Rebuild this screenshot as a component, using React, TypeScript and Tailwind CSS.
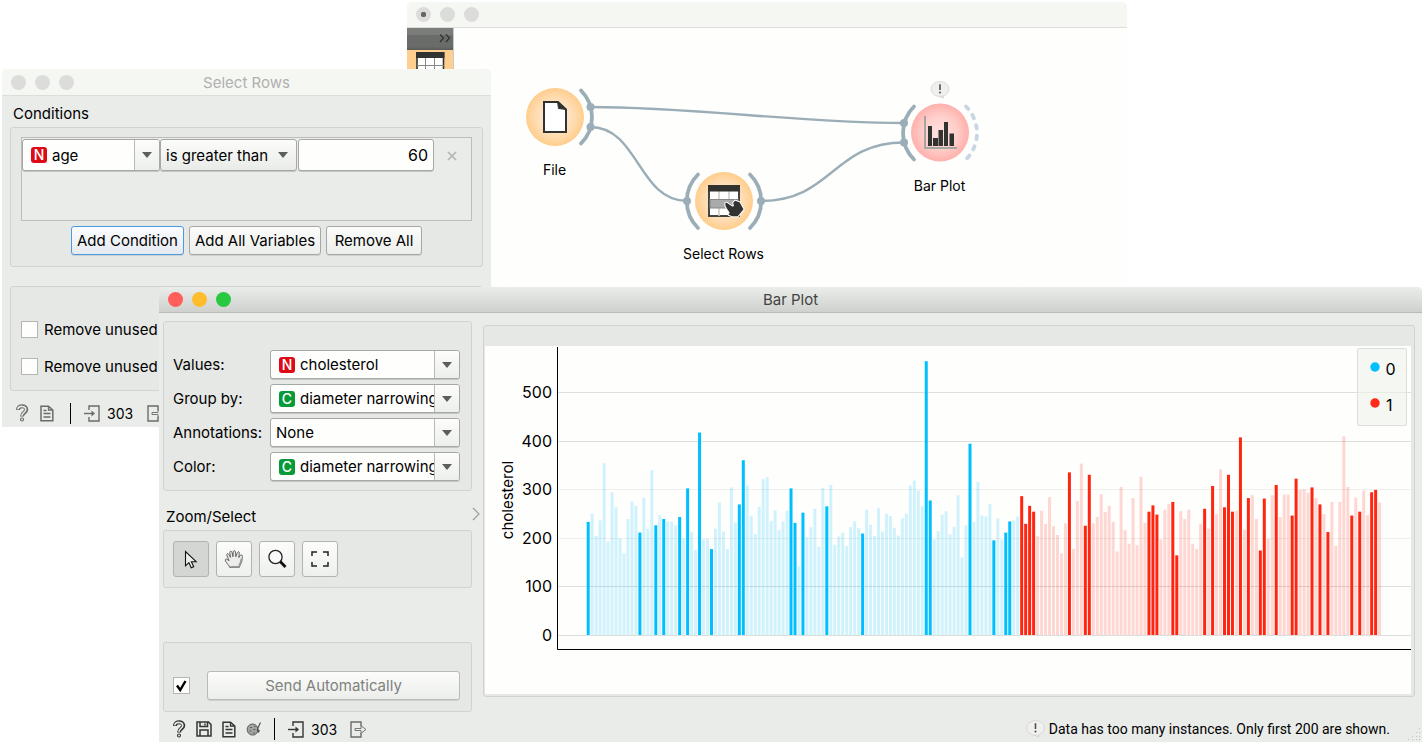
import { useId, type ReactNode } from "react";

const values = [
  233, 250, 204, 236, 354, 192, 294, 263, 199, 168, 239, 275, 266, 211, 283, 219, 340, 226, 247, 239,
  234, 233, 226, 243, 199, 302, 212, 175, 417, 197, 198, 177, 219, 273, 213, 177, 304, 232, 269, 360,
  308, 245, 208, 264, 321, 325, 235, 257, 216, 234, 256, 302, 231, 141, 252, 201, 222, 260, 182, 303,
  265, 309, 186, 203, 211, 183, 222, 234, 220, 209, 258, 227, 204, 261, 213, 250, 245, 221, 205, 240,
  250, 308, 318, 298, 265, 564, 277, 197, 214, 248, 255, 207, 223, 288, 160, 226, 394, 233, 315, 246,
  244, 270, 195, 240, 196, 211, 234, 236, 244,
  286, 229, 266, 254, 203, 256, 229, 284, 224, 206, 168, 230, 335, 177, 276, 353, 225, 330, 230, 243,
  290, 253, 266, 233, 172, 305, 216, 188, 282, 185, 326, 231, 254, 267, 248, 197, 258, 270, 274, 164,
  255, 239, 258, 188, 177, 229, 260, 219, 307, 249, 341, 263, 330, 254, 256, 407, 217, 282, 288, 239,
  174, 281, 198, 288, 309, 243, 289, 289, 246, 322, 299, 300, 293, 304, 282, 269, 249, 212, 274, 184,
  274, 409, 305, 246, 283, 254, 298, 247, 294, 299, 273,
];
const firstOfGroupOne = 109;
const selected = new Set([
  0, 13, 17, 19, 23, 25, 28, 31, 38, 39, 51, 52, 54, 60, 69, 85, 86, 96, 102, 105, 106, 109, 110, 111, 112,
  121, 125, 126, 141, 142, 143, 147, 148, 155, 157, 160, 161, 162, 164, 166, 169, 170, 173, 177, 178, 182,
  184, 186, 192, 194, 197, 198,
]);

function Chart() {
  const y = (v: number) => 289 - v * 0.4855;
  return (
    <svg viewBox="0 0 926 348" className="block w-full bg-[#fefefd]" role="img" aria-label="cholesterol by instance">
      {[0, 100, 200, 300, 400, 500].map((v) => (
        <g key={v}>
          <rect x="73" y={Math.round(y(v))} width="853" height="1" fill={v === 200 || v === 300 ? "#efefee" : "#dededd"} />
          <text x="67" y={Math.round(y(v)) + 6} textAnchor="end" fontSize="16">{v}</text>
        </g>
      ))}
      {values.map((v, i) => (
        <rect
          key={i}
          x={101.7 + i * 3.977}
          y={y(v)}
          width="3"
          height={289 - y(v)}
          fill={i < firstOfGroupOne ? "#00bfff" : "#ff2611"}
          fillOpacity={selected.has(i) ? 1 : 0.18}
        />
      ))}
      <path d="M72.5 1V303.500H926" fill="none" stroke="#000" />
      <text transform="translate(28 154) rotate(-90)" textAnchor="middle" fontSize="15">cholesterol</text>
      <rect x="872.5" y="2.500" width="49" height="77" rx="1.500" fill="#eef1ed" fillOpacity="0.6" stroke="#dcdedb" />
      <circle cx="890" cy="21" r="4.700" fill="#00bfff" />
      <circle cx="890" cy="57" r="4.700" fill="#ff2a17" />
      <text x="900.500" y="29" fontSize="16">0</text>
      <text x="901" y="65" fontSize="16">1</text>
    </svg>
  );
}

function Bubble() {
  return (
    <>
      <ellipse cx="9.500" cy="8" rx="9" ry="7.500" fill="#f0f0ef" stroke="#d2d3d2" strokeWidth="0.800" />
      <path d="M8.500 15l4 2.200.6-2.700" fill="#e6e6e5" stroke="#c9cac9" strokeWidth="0.700" />
      <path d="M9.500 3.200v5.800" stroke="#505050" strokeWidth="1.600" />
      <circle cx="9.500" cy="11.600" r="1" fill="#505050" />
    </>
  );
}

function Workflow() {
  return (
    <svg viewBox="407 28 720 262" className="block w-full" fontSize="14" textAnchor="middle">
      <defs>
        <radialGradient id="orange">
          <stop offset="0.2" stopColor="#ffead6" />
          <stop offset="0.600" stopColor="#ffdfb9" />
          <stop offset="1" stopColor="#ffcd8c" />
        </radialGradient>
        <radialGradient id="pink">
          <stop offset="0.200" stopColor="#ffdcd9" />
          <stop offset="0.600" stopColor="#ffcdc9" />
          <stop offset="1" stopColor="#ffb0ac" />
        </radialGradient>
        <linearGradient id="strip" x1="0" y1="0" x2="0" y2="1">
          <stop offset="0" stopColor="#7b7d7a" />
          <stop offset="0.300" stopColor="#7b7d7a" />
          <stop offset="0.320" stopColor="#6a6c69" />
          <stop offset="0.850" stopColor="#6a6c69" />
          <stop offset="1" stopColor="#585a57" />
        </linearGradient>
      </defs>
      {/* collapsed tool box */}
      <rect x="407" y="28" width="46" height="22" fill="url(#strip)" />
      <path d="M440 34.500l3.500 3.500-3.500 4M446 34.500l3.500 3.500-3.500 4" fill="none" stroke="#333" strokeWidth="1.300" />
      <rect x="407" y="50" width="46" height="32" fill="#ffcf8f" />
      <path d="M453.500 28v60" stroke="#c4cbd2" />
      <rect x="417" y="53" width="26.500" height="26" fill="#fff" stroke="#30332f" strokeWidth="1.600" />
      <rect x="416" y="52" width="28.500" height="6" fill="#30332f" />
      <path d="M425.500 58v20M434.500 58v20M417 65.500h27" stroke="#888" />

      {/* links */}
      <g fill="none" stroke="#9badb6" strokeWidth="2.300">
        <path d="M590 107C695 107 799 123 904 123" />
        <path d="M590 127C639 127 638 201 687 201" />
        <path d="M761 201C832 201 833 142.500 904 142.500" />
      </g>
      <g fill="none" stroke="#9badb6" strokeWidth="3.800" strokeLinecap="round">
        <path d="M581 90.500A37.500 37.500 0 0 1 581 143.500" />
        <path d="M698 174.500A37.500 37.500 0 0 0 698 228" />
        <path d="M750 174.500A37.500 37.500 0 0 1 750 228" />
        <path d="M914 106.500A37.500 37.500 0 0 0 914 159.500" />
        <path d="M966 106.500A37.500 37.500 0 0 1 966 159.500" stroke="#c8d5e2" strokeDasharray="3.500 7.200" />
      </g>
      <g fill="#9badb6">
        <circle cx="590.500" cy="107" r="4" />
        <circle cx="590.500" cy="127" r="4" />
        <circle cx="687" cy="201" r="4" />
        <circle cx="761" cy="201" r="4" />
        <circle cx="904" cy="123" r="4" />
        <circle cx="904" cy="142.500" r="4" />
      </g>

      {/* File */}
      <circle cx="555" cy="117" r="29" fill="url(#orange)" />
      <path d="M544 102H558L566 109.500V132H544Z" fill="#fff" stroke="#30332f" strokeWidth="2" />
      <path d="M557.500 101.500L566.500 109.500 558.500 108.500Z" fill="#30332f" stroke="#30332f" />
      <text x="554.500" y="175">File</text>

      {/* Select Rows */}
      <circle cx="724" cy="201" r="29" fill="url(#orange)" />
      <rect x="709" y="186" width="30" height="30" fill="#fff" stroke="#30332f" strokeWidth="1.800" />
      <path d="M719 191v25M729 191v25" stroke="#cfc8c2" strokeWidth="1.500" />
      <rect x="710" y="199.500" width="28" height="8.500" fill="#aaa" stroke="#888" />
      <rect x="708" y="185" width="32" height="6.500" fill="#30332f" />
      <path
        d="M725.300 203.300c.8-.8 1.800-.4 2.600.2l4.300 3 1.800-.3-.8-3.500 2-1.900 4.300 1.500 4 7-4.500 5.500-1.500 1.500h-5.500l-3.500-1.800 1.200-1.800-3-4.500-1.200-2.500z"
        fill="#30332f"
        stroke="#fff"
        strokeWidth="2"
        strokeLinejoin="round"
        paintOrder="stroke"
      />
      <text x="723.500" y="259">Select Rows</text>

      {/* Bar Plot */}
      <circle cx="940" cy="132.500" r="29" fill="url(#pink)" />
      <path d="M925 116v32h32" fill="none" stroke="#a5a5a2" strokeWidth="2" />
      <path d="M928 126h4v20h-4zM933 138h5v8h-5zM938.500 130h4.500v16h-4.500zM944 122h4v24h-4zM949.500 133.500h4.500v12.500h-4.500z" fill="#30332f" />
      <g transform="translate(930.500 81)">
        <Bubble />
      </g>
      <text x="939.500" y="190.500">Bar Plot</text>
    </svg>
  );
}

function Lights({ colors }: { colors: [string, string, string] }) {
  return (
    <div className="absolute left-[9px] flex gap-[9px]">
      {colors.map((c, i) => (
        <span key={i} className={`size-[15px] rounded-full ${c}`} />
      ))}
    </div>
  );
}

function Badge({ kind }: { kind: "N" | "C" }) {
  return (
    <span
      className={`ml-2 grid size-4 shrink-0 place-items-center rounded-[3px] text-[14px] leading-none font-medium text-white ${kind === "N" ? "bg-[#de0a16]" : "bg-[#079a38]"}`}
    >
      {kind}
    </span>
  );
}

function Arrow() {
  return (
    <svg viewBox="0 0 10 6" className="h-[6px] w-[10px]" aria-hidden="true">
      <path d="M0 0h10L5 6z" fill="#5c5e5c" />
    </svg>
  );
}

function Combo({ id, label, badge, value }: { id: string; label?: string; badge?: "N" | "C"; value: string }) {
  return (
    <div className="flex h-full min-w-0 flex-1 items-stretch overflow-hidden rounded-[3px] border border-[#a6a8a5] bg-[#fefefd] shadow-[0_1px_0_#c4c6c3]">
      <div className="flex min-w-0 flex-1 items-center">
        {badge && <Badge kind={badge} />}
        <select id={id} aria-label={label} className="h-full w-0 flex-1 appearance-none overflow-hidden bg-transparent pt-[2px] pl-[5px] text-[15px] text-clip outline-none">
          <option>{value}</option>
        </select>
      </div>
      <span className="pointer-events-none grid w-[25px] shrink-0 place-items-center border-l border-[#b8bab7] bg-linear-to-b from-[#fdfdfc] to-[#ecefeb]">
        <Arrow />
      </span>
    </div>
  );
}

function Field({ label, badge, value }: { label: string; badge?: "N" | "C"; value: string }) {
  const id = useId();
  return (
    <div className="flex h-[29px] items-center">
      <label htmlFor={id} className="w-[97px] shrink-0 pt-[2px] whitespace-nowrap">
        {label}
      </label>
      <Combo id={id} badge={badge} value={value} />
    </div>
  );
}

function Check({ label, hidden, checked }: { label: string; hidden?: boolean; checked?: boolean }) {
  return (
    <label className="flex items-center gap-[6px] whitespace-nowrap">
      <span className="relative grid size-[17px] place-items-center">
        <input
          type="checkbox"
          defaultChecked={checked}
          aria-label={hidden ? label : undefined}
          className="peer size-[17px] appearance-none border border-[#b4b6b3] bg-[#fefefd]"
        />
        <svg viewBox="0 0 17 17" className="pointer-events-none absolute inset-0 hidden peer-checked:block" aria-hidden="true">
          <path d="M4 8.500l3.200 4.500L12.500 4" fill="none" stroke="#000" strokeWidth="2.400" />
        </svg>
      </span>
      {!hidden && <span className="pt-[2px]">{label}</span>}
    </label>
  );
}

function PushButton({ children, className }: { children: ReactNode; className: string }) {
  return (
    <button type="button" className={`h-[29px] rounded-[3px] border pt-[2px] whitespace-nowrap shadow-[0_1px_0_#cfd1ce] ${className}`}>
      {children}
    </button>
  );
}

const box = "rounded-[3px] border border-[#d1d3d0] bg-[#e6e8e5]";

function HelpIcon() {
  return (
    <svg viewBox="0 0 14 18" className="h-[18px] w-[14px]" fill="none" aria-hidden="true">
      <path d="M3 6c-.2-5 8.500-5 8.300-.3C11.200 8.500 7 8.500 7 12.500" stroke="currentColor" strokeWidth="4" />
      <path d="M2.800 5.300c.5-3.800 8.200-4 8 .4C10.600 8.200 7 8.500 7 11.800" stroke="#e9ebe8" strokeWidth="1.600" />
      <circle cx="7" cy="15.500" r="1.500" fill="#e9ebe8" stroke="currentColor" strokeWidth="1.100" />
    </svg>
  );
}

function ReportIcon() {
  return (
    <svg viewBox="0 0 14 17" className="h-[17px] w-[14px]" fill="none" stroke="currentColor" strokeWidth="1.300" aria-hidden="true">
      <path d="M1 1.200h7.500L12.800 5v10.800H1z" strokeWidth="1.500" />
      <path d="M8.500 1.200V5h4.300M3.500 5.500h3M3.500 8.500h7M3.500 12h7" />
    </svg>
  );
}

function SaveIcon() {
  return (
    <svg viewBox="0 0 16 16" className="size-4" fill="none" stroke="currentColor" strokeWidth="1.500" aria-hidden="true">
      <path d="M1 1h11.500L15 3.500V15H1zM4 1v4.500h7.500V1M4 15V9h8v6" />
      <path d="M9 2.500v2" />
    </svg>
  );
}

function PaletteIcon() {
  return (
    <svg viewBox="0 0 16 16" className="size-4" fill="none" aria-hidden="true">
      <path d="M6.500 3C3 3 1 6 1.200 8.800 1.500 12 4 14.500 7.500 14c3.500-.5 3-2.500 4.300-3.800C12.300 6 10 3 6.500 3z" fill="#a3a5a2" stroke="#5a5b5a" />
      <path d="M4 6.500h2M8 5.500h1.500M3.500 10h2M7.500 8.500h2M7 12h2" stroke="#5a5b5a" />
      <path d="M14.500 1.500l-2.600 5.500-.6 3" stroke="#4b4c4b" strokeWidth="1.100" />
      <path d="M12 8.500l1.500.5c.5 1.500-.5 3-2 3z" fill="#4b4c4b" />
    </svg>
  );
}

function InputIcon() {
  return (
    <svg viewBox="0 0 16 17" className="h-[17px] w-4" fill="none" stroke="currentColor" strokeWidth="1.400" aria-hidden="true">
      <path d="M5 5V1h10v15H5v-4" />
      <path d="M0 8.500h9" />
      <path d="M7.500 5.500L11 8.500l-3.500 3z" fill="currentColor" stroke="none" />
    </svg>
  );
}

function OutputIcon() {
  return (
    <svg viewBox="0 0 17 17" className="h-[17px] w-[17px]" fill="none" stroke="currentColor" strokeWidth="1.400" aria-hidden="true">
      <path d="M11 5V1H1v15h10v-4" />
      <path d="M5 7.500h6V4.700l5 3.800-5 3.800V9.500H5z" strokeWidth="0.900" />
    </svg>
  );
}

function IconButton({ label, children }: { label: string; children: ReactNode }) {
  return (
    <button type="button" aria-label={label} className="grid place-items-center">
      {children}
    </button>
  );
}

function ToolButton({ label, pressed, children }: { label: string; pressed?: boolean; children: ReactNode }) {
  return (
    <button
      type="button"
      aria-label={label}
      aria-pressed={pressed}
      className={`grid size-9 place-items-center rounded-[3px] border border-[#b1b3b0] ${pressed ? "bg-[#d4d6d3]" : "bg-linear-to-b from-[#fcfdfb] to-[#eef0ed]"}`}
    >
      {children}
    </button>
  );
}

function CanvasWindow() {
  return (
    <section className="absolute top-[2px] left-[407px] w-[720px] overflow-hidden rounded-t-[5px] bg-[#fefefd]">
      <header className="flex h-[26px] items-center border-b border-[#dcdedb] bg-[#f5f7f3]">
        <Lights colors={["bg-[radial-gradient(circle,#666_2.5px,#dcdcdb_3px)]", "bg-[#dcdcdb]", "bg-[#dcdcdb]"]} />
      </header>
      <Workflow />
    </section>
  );
}

function SelectRowsWindow() {
  return (
    <section className="absolute top-[69px] left-[2px] w-[489px] overflow-hidden rounded-t-[5px] bg-[#eaece9]">
      <header className="relative flex h-[27px] items-center justify-center border-b border-[#dcdedb] bg-[#f5f7f3] text-[#b0b0af]">
        <Lights colors={["bg-[#dcdcdb]", "bg-[#dcdcdb]", "bg-[#dcdcdb]"]} />
        <h2 className="pt-[2px]">Select Rows</h2>
      </header>
      <div className="px-2 pt-[8px]">
        <h3 className="pl-[3px] leading-[20px]">Conditions</h3>
        <div className={`${box} mt-[3px] px-[10px] pt-[9px] pb-[11px]`}>
          <div className="h-[84px] border border-[#bcbebb] bg-[#eaece9] py-px">
            <div className="flex h-8 items-center">
              <div className="flex h-full w-[138px]">
                <Combo id="condition-variable" label="Variable" badge="N" value="age" />
              </div>
              <div className="relative flex h-full w-[137px] items-center rounded-[3px] border border-[#a6a8a5] bg-linear-to-b from-[#fcfdfb] to-[#e9ebe8] shadow-[0_1px_0_#c4c6c3]">
                <select aria-label="Operator" className="h-full w-full appearance-none bg-transparent pt-[2px] pl-[5px] outline-none">
                  <option>is greater than</option>
                </select>
                <span className="pointer-events-none absolute right-2">
                  <Arrow />
                </span>
              </div>
              <input
                aria-label="Value"
                defaultValue="60"
                className="ml-px h-full w-[136px] rounded-[3px] border border-[#a6a8a5] bg-[#fefefd] px-[5px] text-right text-[16px] shadow-[0_1px_0_#c4c6c3] outline-none"
              />
              <button type="button" aria-label="Remove condition" className="mt-[2px] ml-[13px] grid size-[10px] place-items-center">
                <svg viewBox="0 0 10 10" className="size-[10px]">
                  <path d="M1 1l8 8M9 1l-8 8" stroke="#b4b6b3" strokeWidth="1.700" />
                </svg>
              </button>
            </div>
          </div>
          <div className="mt-[5px] flex gap-[5px] pl-[50px]">
            <PushButton className="w-[113px] border-[#4b9ae4] bg-linear-to-b from-[#fbfdff] to-[#e6eaf0]">Add Condition</PushButton>
            <PushButton className="w-[132px] border-[#a6a8a5] bg-linear-to-b from-[#fcfdfb] to-[#eceeeb]">Add All Variables</PushButton>
            <PushButton className="w-[96px] border-[#a6a8a5] bg-linear-to-b from-[#fcfdfb] to-[#eceeeb]">Remove All</PushButton>
          </div>
        </div>
        <div className={`${box} mt-[19px] flex h-[105px] flex-col gap-[17px] px-[10px] pt-[32px]`}>
          <div className="flex h-5 items-center"><Check label="Remove unused" /></div>
          <div className="flex h-5 items-center"><Check label="Remove unused" /></div>
        </div>
      </div>
      <footer className="flex h-[36px] items-center pt-[8px] pl-[13px] text-[14px] text-[#6a6c6a]">
        <IconButton label="Help"><HelpIcon /></IconButton>
        <span className="ml-[11px] flex"><IconButton label="Report"><ReportIcon /></IconButton></span>
        <span className="ml-[16px] h-[21px] w-px bg-black" />
        <span className="ml-[13px] flex items-center gap-[7px]"><InputIcon /><span className="text-black">303</span></span>
        <span className="ml-[14px]"><OutputIcon /></span>
      </footer>
    </section>
  );
}

function BarPlotWindow() {
  return (
    <section className="absolute top-[287px] right-[2px] left-[159px] overflow-hidden rounded-t-[5px] bg-[#eaece9]">
      <header className="relative flex h-[26px] items-center justify-center border-b border-[#b9bbb8] bg-linear-to-b from-[#ebedea] to-[#cfd1ce] text-[#424342]">
        <Lights colors={["bg-[#ff5f58]", "bg-[#ffbd2e]", "bg-[#28c941]"]} />
        <h2 className="pt-[2px]">Bar Plot</h2>
      </header>
      <div className="flex pr-[7px] pl-1">
        <div className="flex w-[309px] shrink-0 flex-col pt-[8px]">
          <div className={`${box} flex h-[170px] flex-col gap-[5px] pt-[28px] pr-[11px] pl-[9px]`}>
            <Field label="Values:" badge="N" value="cholesterol" />
            <Field label="Group by:" badge="C" value="diameter narrowing" />
            <Field label="Annotations:" value="None" />
            <Field label="Color:" badge="C" value="diameter narrowing" />
          </div>
          <h3 className="mt-[16px] pl-[3px] leading-[20px]">Zoom/Select</h3>
          <div className={`${box} mt-[3px] flex h-[58px] items-center gap-[7px] pl-[9px]`}>
            <ToolButton label="Select" pressed>
              <svg viewBox="0 0 14 19" className="h-[19px] w-[14px]">
                <path d="M1.500 1.500v14.300l3.400-3.200 2.300 5.200 2.500-1.100-2.300-5h4.800z" fill="#eceeeb" stroke="#111" strokeWidth="1.100" />
              </svg>
            </ToolButton>
            <ToolButton label="Pan">
              <svg viewBox="0 0 20 20" className="size-5">
                <path
                  d="M5.800 18.500c-.5-2-3-4-4.300-6.500-.8-1.700.6-2.500 1.800-1.500l1.700 1.200L2.800 6.200c-.4-1.600 1.300-2.200 2-.7L6.500 8.300 5.800 3.500c0-1.600 1.900-1.700 2.200-.1l1 4.300.2-5c.4-1.600 2.100-1.300 2.200.1l.5 4.900 1.500-4.200c.7-1.400 2.300-.8 1.900.7L14.800 8.500l1.600-2.300c1-.9 2.200 0 1.900 1.200-.3 1.700.2 5.800-2.300 9l-.8 2.100z"
                  fill="#ececeb"
                  stroke="#555655"
                  strokeWidth="0.900"
                />
                <path d="M6.500 17.800h8.500l.6-2c1.200-1.800 1.600-4 1.800-6" fill="none" stroke="#999" strokeWidth="1.800" />
              </svg>
            </ToolButton>
            <ToolButton label="Zoom">
              <svg viewBox="0 0 20 20" className="size-5" fill="none">
                <circle cx="8.500" cy="8" r="6.600" fill="#fafafa" stroke="#222" strokeWidth="1.300" />
                <path d="M13.200 12.500l5.300 5.500" stroke="#111" strokeWidth="2.800" />
              </svg>
            </ToolButton>
            <ToolButton label="Reset zoom">
              <svg viewBox="0 0 18 16" className="h-4 w-[18px]" fill="none" stroke="#222" strokeWidth="1.500">
                <path d="M1 5V1h5M12 1h5v4M17 11v4h-5M6 15H1v-4" />
              </svg>
            </ToolButton>
          </div>
          <div className={`${box} mt-[54px] flex h-[70px] items-start gap-[17px] pt-[28px] pr-[11px] pl-[9px]`}>
            <div className="flex h-[29px] items-center"><Check label="Send automatically" hidden checked /></div>
            <PushButton className="flex-1 border-[#b9bbb8] bg-linear-to-b from-[#fcfdfb] to-[#eceeeb] text-[#80827f]">Send Automatically</PushButton>
          </div>
        </div>
        <div className="flex w-[11px] shrink-0 pt-[194px]">
          <svg viewBox="0 0 8 14" className="h-[14px] w-2">
            <path d="M1 1l6 6-6 6" fill="none" stroke="#9c9e9b" strokeWidth="1.200" />
          </svg>
        </div>
        <div className={`${box} mt-[12px] mb-[15px] min-w-0 flex-1 pt-[20px] pr-[3px] pb-[2px] pl-px`}>
          <Chart />
        </div>
      </div>
      <footer className="flex h-[30px] items-center pt-[4px] pr-[32px] pl-[13px] text-[14px] text-[#343634]">
        <IconButton label="Help"><HelpIcon /></IconButton>
        <span className="ml-[10px] flex gap-[10px]">
          <IconButton label="Save"><SaveIcon /></IconButton>
          <IconButton label="Report"><ReportIcon /></IconButton>
          <IconButton label="Visual settings"><PaletteIcon /></IconButton>
        </span>
        <span className="ml-[12px] h-[22px] w-px bg-black" />
        <span className="ml-[13px] flex items-center gap-[7px]"><InputIcon /><span className="text-black">303</span></span>
        <span className="ml-[13px] text-[#6a6c6a]"><OutputIcon /></span>
        <p className="ml-auto flex items-center gap-[4px] font-['Roboto','Inter',sans-serif] text-[14px] text-black">
          <svg viewBox="0 0 19 18" className="h-[18px] w-[19px]"><Bubble /></svg>
          Data has too many instances. Only first 200 are shown.
        </p>
      </footer>
      <svg viewBox="0 0 13 13" className="absolute right-px bottom-px size-[13px]" fill="#bfc1be" aria-hidden="true">
        <path d="M11 0h1v1h-1zM8 4h1v1h-1zM11 4h1v1h-1zM4 8h1v1h-1zM8 8h1v1h-1zM11 8h1v1h-1zM0 11h1v1h-1zM4 11h1v1h-1zM8 11h1v1h-1zM11 11h1v1h-1z" />
      </svg>
    </section>
  );
}

export default function App() {
  return (
    <main className="relative min-h-screen overflow-hidden bg-white font-['Inter','Liberation_Sans',sans-serif] text-[15px] text-black">
      <CanvasWindow />
      <SelectRowsWindow />
      <BarPlotWindow />
    </main>
  );
}
